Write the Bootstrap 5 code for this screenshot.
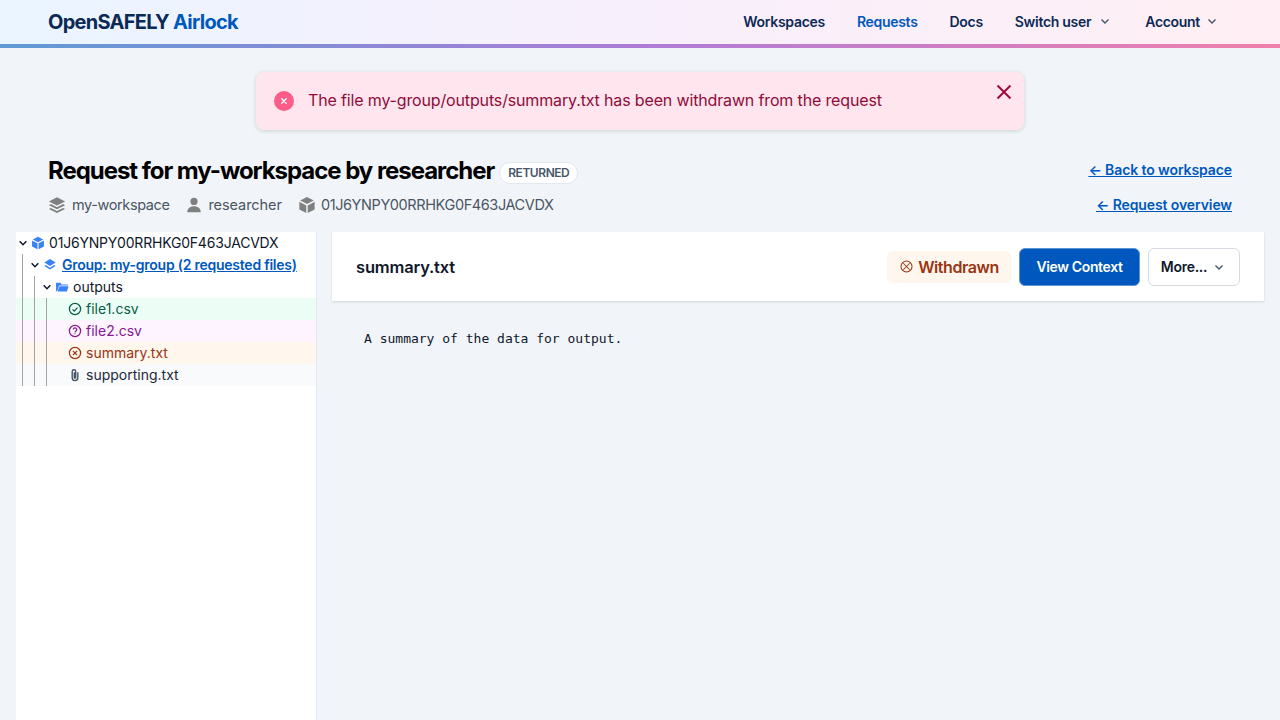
<!DOCTYPE html>
<html lang="en">
<head>
<meta charset="utf-8">
<title>Airlock</title>
<link href="https://cdn.jsdelivr.net/npm/bootstrap@5.3.0/dist/css/bootstrap.min.css" rel="stylesheet">
<style>
html,body{height:100%;overflow:hidden}
body{background:#f1f5f9;font-family:Inter,"Liberation Sans",sans-serif;color:#0f172a;display:flex;flex-direction:column;font-size:14px}
.topbar{height:48px;flex:none;padding:0 48px;background:linear-gradient(90deg,#eaf5ff,#f8effc 50%,#ffeff4);border-bottom:4px solid;border-image:linear-gradient(90deg,#5f9bd6,#ae7cd8 50%,#f07fab) 1}
.brandname{font-size:20px;font-weight:700;color:#0a2a55;letter-spacing:-.72px;text-decoration:none;padding-bottom:1px}
.brandname b{color:#0058be;font-weight:700}
.toplink{font-size:14px;font-weight:600;color:#0a2a55;text-decoration:none;letter-spacing:-.3px;display:flex;align-items:center;gap:8px;padding-bottom:2px}
.toplink.onpage{color:#0058be}
.toplink.lastlink{margin-left:2px;gap:6px}
.toplinks{gap:32px;margin-right:14px}
.toplinks svg{width:12px;height:12px}
.flashbox{width:768px;height:58px;margin:24px auto 0;background:#ffe5ed;border-radius:8px;box-shadow:0 1px 4px rgba(15,23,42,.16);color:#900b3b;font-size:16px;letter-spacing:-.15px;padding:0 0 0 18px;flex:none}
.flashdot{width:20px;height:20px;margin-right:14px}
.flashtext{padding-bottom:2px}
.flashclose{width:18px;height:18px;margin:11px 11px 0 0;border:0;background:none;padding:0;color:#9f0a3c;line-height:0}
.headzone{padding:0 48px;margin-top:25px;flex:none;height:77px}
.pagetitle{font-size:24px;font-weight:700;color:#000;letter-spacing:-1.04px;margin:0;line-height:32px}
.statuspill{font-size:12px;font-weight:600;color:#475569;background:#fff;border:1px solid #e2e8f0;border-radius:99px;padding:0 8px;line-height:20px;letter-spacing:-.45px;margin-left:5px;margin-top:4px}
.metaline{font-size:14.5px;color:#4b5563;margin-top:7px;gap:16px;letter-spacing:-.4px}
.metaline svg{width:18px;height:18px;color:#808080;flex:none}
.metaitem{display:flex;align-items:center;gap:5px}
.metaitem:first-child{gap:6px}
.metawide{letter-spacing:-.06px}
.backlink{font-size:14px;font-weight:600;color:#0058be;text-decoration:underline;letter-spacing:-.1px;line-height:20px;margin-top:5px}
.backlink + .backlink{margin-top:15px}
.mainzone{flex:1;min-height:0;gap:15px;padding:0 16px}
.treepane{width:301px;flex:none;background:#fff;border-right:1px solid #e2e8f0;font-size:14px}
.treerow{height:22px;padding-left:1px;color:#0f172a;white-space:nowrap}
.treerow svg{flex:none}
.rowlabel{padding-bottom:2px}
.guide{width:12px;height:22px;flex:none;background:linear-gradient(#a3a3a3,#a3a3a3) 5px 0/1px 100% no-repeat}
.chev{width:10px;height:10px;margin:0 1px;flex:none}
.chevgap{width:13px;flex:none}
.ticon{width:14px;height:14px;margin:0 4px 0 2px}
.rowid{letter-spacing:-.2px}
.rowgreen{background:#ecfdf5;color:#065f46}
.rowpurple{background:#fdf4ff;color:#86198f}
.roworange{background:#fff7ed;color:#9a3412}
.rowgrey{background:#f8fafc;color:#1e293b}
.grouplink{color:#0058be;font-weight:600;letter-spacing:-.24px;margin-left:1px}
.filepane{flex:1;min-width:0}
.filehead{height:69px;background:#fff;box-shadow:0 1px 2px rgba(15,23,42,.14);padding:0 24px}
.filetitle{font-size:16.500px;font-weight:600;color:#0f172a;margin:0;letter-spacing:-.17px;padding-top:2px}
.withdrawnpill{background:#fff7ed;color:#9a3412;border-radius:6px;height:32px;padding:0 12px 0 13px;font-size:16px;font-weight:600;gap:5px;letter-spacing:-.42px}
.btnview{background:#0058be;border:1px solid #5e93d6;color:#fff;font-size:14px;font-weight:600;border-radius:6px;height:38px;width:121px;padding:0;letter-spacing:-.36px}
.btnview:hover{background:#004fa8;color:#fff}
.btnmore{background:#fff;border:1px solid #d6dae3;color:#0f172a;font-size:14px;font-weight:600;border-radius:6px;height:38px;width:92px;padding:0 2px 0 0;letter-spacing:-.3px;display:flex;align-items:center;justify-content:center;gap:6px}
.filetext{font-family:"DejaVu Sans Mono",monospace;font-size:13px;color:#0f172a;margin:0;padding:28px 32px}
</style>
</head>
<body>
<nav class="topbar d-flex align-items-center justify-content-between">
  <a class="brandname" href="#">OpenSAFELY <b>Airlock</b></a>
  <div class="toplinks d-flex align-items-center">
    <a class="toplink" href="#">Workspaces</a>
    <a class="toplink onpage" href="#">Requests</a>
    <a class="toplink" href="#">Docs</a>
    <a class="toplink" href="#">Switch user <svg viewBox="0 0 12 12" fill="none" stroke="#475569" stroke-width="1.4"><path d="M2.500 4.500 6 8l3.500-3.500"/></svg></a>
    <a class="toplink lastlink" href="#">Account <svg viewBox="0 0 12 12" fill="none" stroke="#475569" stroke-width="1.4"><path d="M2.500 4.500 6 8l3.500-3.500"/></svg></a>
  </div>
</nav>

<div class="flashbox d-flex justify-content-between">
  <div class="d-flex align-items-center">
    <svg class="flashdot" viewBox="0 0 20 20"><circle cx="10" cy="10" r="10" fill="#fb5c88"/><path d="M7.800 7.800l4.400 4.400M12.200 7.800l-4.400 4.400" stroke="#fff" stroke-width="1.500" stroke-linecap="round"/></svg>
    <span class="flashtext">The file my-group/outputs/summary.txt has been withdrawn from the request</span>
  </div>
  <button class="flashclose" aria-label="Close"><svg viewBox="0 0 18 18" width="18" height="18" fill="none" stroke="currentColor" stroke-width="2"><path d="M2.500 2.500l13 13M15.500 2.500l-13 13"/></svg></button>
</div>

<header class="headzone d-flex justify-content-between">
  <div>
    <div class="d-flex align-items-center">
      <h1 class="pagetitle">Request for my-workspace by researcher</h1>
      <span class="statuspill">RETURNED</span>
    </div>
    <div class="metaline d-flex align-items-center">
      <span class="metaitem"><svg viewBox="0 0 20 20" fill="currentColor"><path d="M10 1.500 1 6l9 4.500L19 6z"/><path d="M3.200 9 1 10.200l9 4.500 9-4.500L16.800 9 10 12.400z"/><path d="M3.200 13.200 1 14.400l9 4.500 9-4.500-2.200-1.200L10 16.600z"/></svg>my-workspace</span>
      <span class="metaitem metawide"><svg viewBox="0 0 20 20" fill="currentColor"><circle cx="10" cy="6" r="4"/><path d="M2.500 18c0-4 3-6.500 7.500-6.500s7.500 2.500 7.500 6.500z"/></svg>researcher</span>
      <span class="metaitem"><svg viewBox="0 0 20 20" fill="currentColor"><path d="M10 1 2.500 5l7.500 4 7.500-4z"/><path d="M1.500 6.500v8.500l7.700 4v-8.500z"/><path d="M18.500 6.500v8.500l-7.700 4v-8.500z"/></svg>01J6YNPY00RRHKG0F463JACVDX</span>
    </div>
  </div>
  <div class="d-flex flex-column align-items-end">
    <a class="backlink" href="#">← Back to workspace</a>
    <a class="backlink" href="#">← Request overview</a>
  </div>
</header>

<div class="mainzone d-flex">
  <aside class="treepane">
    <div class="treerow rowid d-flex align-items-center">
      <svg class="chev" viewBox="0 0 12 12" fill="none" stroke="#0f172a" stroke-width="1.800"><path d="M2 4l4 4 4-4"/></svg>
      <svg class="ticon" viewBox="0 0 20 20" fill="#3b82f6"><path d="M10 1 2.500 5l7.500 4 7.500-4z"/><path d="M1.500 6.500v8.500l7.700 4v-8.500z"/><path d="M18.500 6.500v8.500l-7.700 4v-8.500z"/></svg>
      <span class="rowlabel">01J6YNPY00RRHKG0F463JACVDX</span>
    </div>
    <div class="treerow d-flex align-items-center">
      <span class="guide"></span>
      <svg class="chev" viewBox="0 0 12 12" fill="none" stroke="#0f172a" stroke-width="1.800"><path d="M2 4l4 4 4-4"/></svg>
      <svg class="ticon" viewBox="0 0 20 20" fill="#3b82f6"><path d="M10 1.500 2 6.500l8 5 8-5z"/><path d="M4 10 2 11.500l8 5 8-5L16 10l-6 4z"/></svg>
      <a class="grouplink rowlabel" href="#">Group: my-group (2 requested files)</a>
    </div>
    <div class="treerow d-flex align-items-center">
      <span class="guide"></span><span class="guide"></span>
      <svg class="chev" viewBox="0 0 12 12" fill="none" stroke="#0f172a" stroke-width="1.800"><path d="M2 4l4 4 4-4"/></svg>
      <svg class="ticon" viewBox="0 0 20 20" fill="#3b82f6"><path d="M1.500 4h6l2 2.500h9V8H6L3 16H1.500z"/><path d="M6.500 9h13L17 16.500H3.500z"/></svg>
      <span class="rowlabel">outputs</span>
    </div>
    <div class="treerow rowgreen d-flex align-items-center">
      <span class="guide"></span><span class="guide"></span><span class="guide"></span><span class="chevgap"></span>
      <svg class="ticon" viewBox="0 0 20 20" fill="none" stroke="currentColor" stroke-width="1.800"><circle cx="10" cy="10" r="8"/><path d="M6.500 10.500l2.500 2.500 4.500-5"/></svg>
      <span class="rowlabel">file1.csv</span>
    </div>
    <div class="treerow rowpurple d-flex align-items-center">
      <span class="guide"></span><span class="guide"></span><span class="guide"></span><span class="chevgap"></span>
      <svg class="ticon" viewBox="0 0 20 20" fill="none" stroke="currentColor" stroke-width="1.800"><circle cx="10" cy="10" r="8"/><path d="M7.500 8a2.500 2.500 0 1 1 3.500 2.300c-.7.3-1 .8-1 1.700M10 13.500v1.300"/></svg>
      <span class="rowlabel">file2.csv</span>
    </div>
    <div class="treerow roworange d-flex align-items-center">
      <span class="guide"></span><span class="guide"></span><span class="guide"></span><span class="chevgap"></span>
      <svg class="ticon" viewBox="0 0 20 20" fill="none" stroke="currentColor" stroke-width="1.800"><circle cx="10" cy="10" r="8"/><path d="M7 7l6 6M13 7l-6 6"/></svg>
      <span class="rowlabel">summary.txt</span>
    </div>
    <div class="treerow rowgrey d-flex align-items-center">
      <span class="guide"></span><span class="guide"></span><span class="guide"></span><span class="chevgap"></span>
      <svg class="ticon" viewBox="0 0 20 20" fill="none" stroke="#475569" stroke-width="2"><path d="M14 6v8a4 4 0 0 1-8 0V5a2.500 2.500 0 0 1 5 0v8.500a1 1 0 0 1-2 0V6"/></svg>
      <span class="rowlabel">supporting.txt</span>
    </div>
  </aside>
  <main class="filepane">
    <div class="filehead d-flex align-items-center justify-content-between">
      <h2 class="filetitle">summary.txt</h2>
      <div class="d-flex align-items-center gap-2">
        <span class="withdrawnpill d-flex align-items-center"><svg width="13" height="13" viewBox="0 0 20 20" fill="none" stroke="currentColor" stroke-width="1.600"><circle cx="10" cy="10" r="8.500"/><path d="M5 5l10 10M15 5L5 15"/></svg>Withdrawn</span>
        <button class="btn btnview">View Context</button>
        <button class="btn btnmore">More... <svg width="12" height="12" viewBox="0 0 12 12" fill="none" stroke="#475569" stroke-width="1.400"><path d="M2.500 4.500 6 8l3.500-3.500"/></svg></button>
      </div>
    </div>
    <pre class="filetext">A summary of the data for output.</pre>
  </main>
</div>
</body>
</html>
